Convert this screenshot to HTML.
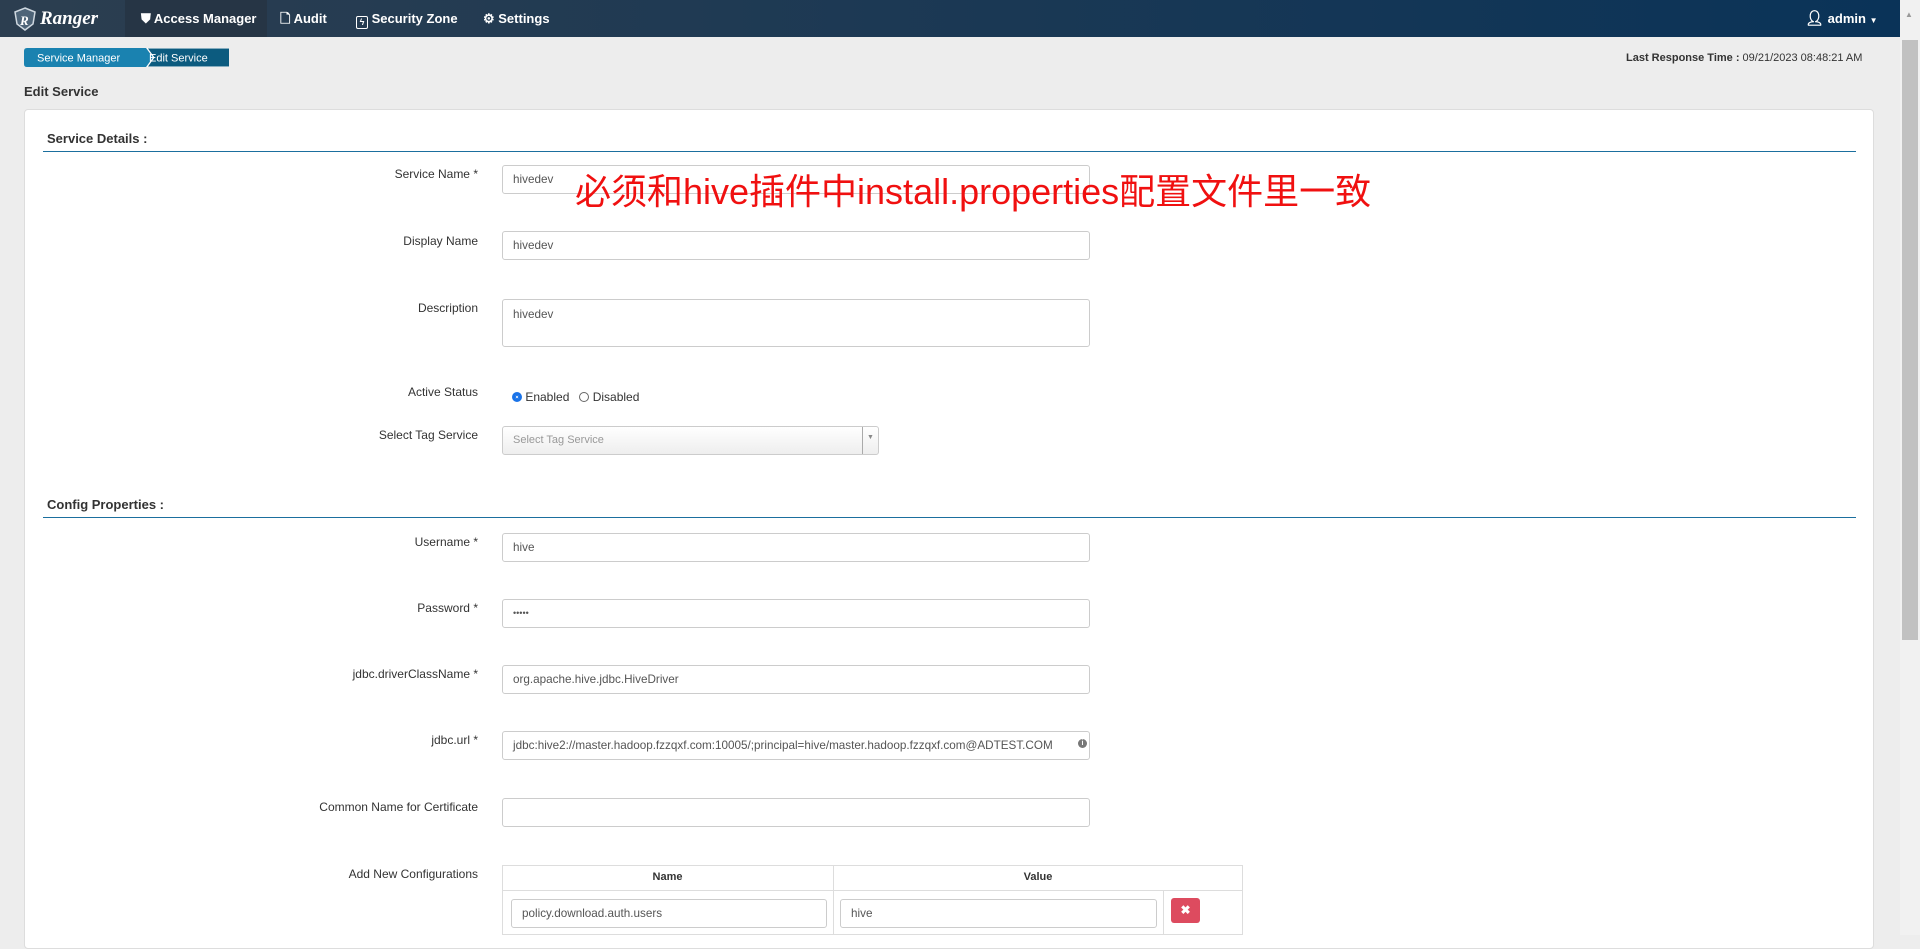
<!DOCTYPE html>
<html><head><meta charset="utf-8"><style>
*{box-sizing:border-box;margin:0;padding:0}
body{width:1920px;height:935px;overflow:hidden;background:#ededed;font-family:"Liberation Sans",Arial,sans-serif;font-size:12px;color:#333;position:relative}
.a{position:absolute}
.nav{left:0;top:0;width:1900px;height:37px;background:linear-gradient(90deg,#2c3e50,#0a3358)}
.nav .t{position:absolute;top:0;height:37px;line-height:37px;color:#fff;font-weight:bold;font-size:13px}
.lbl{position:absolute;right:1442px;text-align:right;font-size:12px;color:#333;white-space:nowrap}
.inp{position:absolute;left:502px;width:588px;height:29px;border:1px solid #ccc;border-radius:3px;background:#fff;padding:0 10px;line-height:27px;font-size:11.7px;color:#555;white-space:nowrap;overflow:hidden}
.sec{position:absolute;left:47px;font-weight:bold;font-size:13px;color:#333}
.line{position:absolute;left:43px;width:1813px;height:1px;background:#1b6f9e}
</style></head><body>
<div class="a nav">
  <svg class="a" style="left:13px;top:7px" width="24" height="24" viewBox="0 0 24 24"><path d="M12 1 L22 5 L20 17 L12 23 L4 17 L2 5Z" fill="#4e6478" stroke="#cfd8e0" stroke-width="1.5"/><text x="7" y="18" font-size="13" font-weight="bold" font-style="italic" fill="#fff" font-family="Liberation Serif">R</text></svg>
  <div class="t" style="left:40px;font-size:19px;font-style:italic;font-family:'Liberation Serif',serif">Ranger</div>
  <div class="a" style="left:125px;top:0;width:142px;height:37px;background:#263545"></div>
  <div class="t" style="left:141px">&#x26CA;&#xFE0E; Access Manager</div>
  <div class="t" style="left:280px">&#x1F5CB;&#xFE0E; Audit</div>
  <div class="t" style="left:356px"><span style="display:inline-block;width:12px;height:13px;border:1.5px solid #fff;border-radius:2px;vertical-align:-2px;font-size:9px;line-height:10px;text-align:center">ϟ</span> Security Zone</div>
  <div class="t" style="left:483px">&#x2699; Settings</div>
  <div class="t" style="left:1805px"><span style="font-size:15px">&#x1F464;&#xFE0E;</span> admin <span style="font-size:8px">▼</span></div>
</div>
<div class="a" style="left:1900px;top:0;width:20px;height:935px;background:#f1f1f1"></div>
<div class="a" style="left:1902px;top:40px;width:16px;height:600px;background:#c1c1c1"></div>
<div class="a" style="left:1905px;top:10px;font-size:8px;color:#999">▲</div>

<svg class="a" style="left:24px;top:48px" width="205" height="19"><path d="M3 0H122L129 9.5L122 19H3Q0 19 0 16V3Q0 0 3 0Z" fill="#1a82b0"/><path d="M123 0H221L228 9.5L221 19H123L130 9.5Z" fill="#0c5b7f" stroke="#fff" stroke-width="1"/><text x="13" y="13.5" font-size="11" fill="#fff" font-family="Liberation Sans">Service Manager</text><text x="125" y="13.5" font-size="11" fill="#fff" font-family="Liberation Sans">Edit Service</text></svg>
<div class="a" style="left:1626px;top:52px;font-size:11px;color:#333"><b>Last Response Time :</b> 09/21/2023 08:48:21 AM</div>
<div class="a" style="left:24px;top:84px;font-size:13px;font-weight:bold;color:#333">Edit Service</div>

<div class="a" style="left:24px;top:109px;width:1850px;height:840px;background:#fff;border:1px solid #ddd;border-radius:4px"></div>
<div class="sec" style="top:131px">Service Details :</div>
<div class="line" style="top:151px"></div>

<div class="lbl" style="top:167px">Service Name *</div>
<div class="inp" style="top:165px">hivedev</div>
<div class="a" style="left:575px;top:170px;font-size:36px;color:#f01010;font-family:'Liberation Sans','Noto Sans CJK SC',sans-serif;white-space:nowrap;line-height:44px">必须和hive插件中install.properties配置文件里一致</div>
<div class="lbl" style="top:234px">Display Name</div>
<div class="inp" style="top:231px">hivedev</div>
<div class="lbl" style="top:301px">Description</div>
<div class="inp" style="top:299px;height:48px;line-height:14px;padding-top:8px">hivedev</div>
<div class="lbl" style="top:385px">Active Status</div>
<div class="a" style="left:512px;top:390px;font-size:12px;color:#333"><span style="display:inline-block;width:10px;height:10px;border-radius:50%;border:3px solid #1a73e8;vertical-align:-1px;box-shadow:0 0 0 1px #1a73e8 inset"></span> Enabled &nbsp; <span style="display:inline-block;width:10px;height:10px;border-radius:50%;border:1px solid #666;vertical-align:-1px"></span> Disabled</div>
<div class="lbl" style="top:428px">Select Tag Service</div>
<div class="inp" style="top:426px;width:377px;background:linear-gradient(#fff,#eee);color:#999;font-size:11px">Select Tag Service</div>
<div class="a" style="left:862px;top:427px;width:1px;height:27px;background:#aaa"></div>
<div class="a" style="left:867px;top:434px;font-size:7px;color:#888">▼</div>

<div class="sec" style="top:497px">Config Properties :</div>
<div class="line" style="top:517px"></div>
<div class="lbl" style="top:535px">Username *</div>
<div class="inp" style="top:533px">hive</div>
<div class="lbl" style="top:601px">Password *</div>
<div class="inp" style="top:599px;font-size:9px">•••••</div>
<div class="lbl" style="top:667px">jdbc.driverClassName *</div>
<div class="inp" style="top:665px">org.apache.hive.jdbc.HiveDriver</div>
<div class="lbl" style="top:733px">jdbc.url *</div>
<div class="inp" style="top:731px">jdbc:hive2://master.hadoop.fzzqxf.com:10005/;principal=hive/master.hadoop.fzzqxf.com@ADTEST.COM</div>
<div class="a" style="left:1078px;top:739px;width:9px;height:9px;border-radius:50%;background:#777;color:#fff;font-size:7px;line-height:9px;text-align:center;font-weight:bold">i</div>
<div class="lbl" style="top:800px">Common Name for Certificate</div>
<div class="inp" style="top:798px"></div>
<div class="lbl" style="top:867px">Add New Configurations</div>
<div class="a" style="left:502px;top:865px;width:741px;height:70px;border:1px solid #ddd"></div>
<div class="a" style="left:502px;top:890px;width:741px;height:1px;background:#ddd"></div>
<div class="a" style="left:833px;top:865px;width:1px;height:70px;background:#ddd"></div>
<div class="a" style="left:1163px;top:890px;width:1px;height:45px;background:#ddd"></div>
<div class="a" style="left:502px;top:871px;width:331px;text-align:center;font-weight:bold;font-size:11px">Name</div>
<div class="a" style="left:833px;top:871px;width:410px;text-align:center;font-weight:bold;font-size:11px">Value</div>
<div class="inp" style="left:511px;top:899px;width:316px">policy.download.auth.users</div>
<div class="inp" style="left:840px;top:899px;width:317px">hive</div>
<div class="a" style="left:1171px;top:898px;width:29px;height:25px;background:#dd4b5f;border-radius:3px;color:#fff;text-align:center;line-height:25px;font-weight:bold;font-size:12px">✖</div>
</body></html>
